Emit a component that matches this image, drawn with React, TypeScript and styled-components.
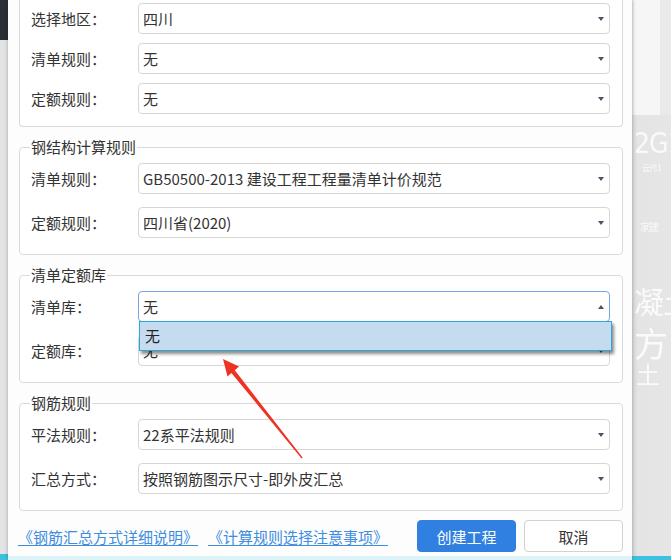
import React from "react";
import styled, { createGlobalStyle, css } from "styled-components";

const GlobalStyle = createGlobalStyle`
  * { box-sizing: border-box; }
  html, body { margin: 0; padding: 0; }
  body {
    width: 671px;
    height: 560px;
    overflow: hidden;
    font-family: "Noto Sans CJK SC", "Microsoft YaHei", sans-serif;
    background: #e4e4e4;
  }
`;

const Screen = styled.div`
  position: relative;
  display: flex;
  width: 671px;
  height: 560px;
  overflow: hidden;
`;

const SideStrip = styled.div`
  width: 8px;
  flex-shrink: 0;
  background: linear-gradient(
    to bottom,
    #2b3037 0,
    #2b3037 40px,
    #e3e4e6 40px,
    #e3e4e6 554px,
    #3cc2df 554px
  );
`;

const Dialog = styled.div`
  position: relative;
  z-index: 1;
  width: 624px;
  flex-shrink: 0;
  display: flex;
  flex-direction: column;
  padding: 0 9px 0 11px;
  background: #fdfdfd;
  border-bottom: 4px solid #dcf3f8;
  box-shadow: 0 0 4px rgba(0, 0, 0, 0.28);
`;

const Group = styled.fieldset<{ $cut?: boolean }>`
  min-width: 0;
  margin: 11px 0 0;
  padding: 7px 12px 16px 11px;
  border: 1px solid #dadada;
  border-radius: 4px;
  background: #fff;

  ${p =>
    p.$cut &&
    css`
      margin-top: 0;
      padding-top: 3px;
      padding-bottom: 12px;
      border-top: none;
      border-top-left-radius: 0;
      border-top-right-radius: 0;
    `}
`;

const Caption = styled.legend`
  padding: 0 1px;
  margin-left: -1px;
  font-size: 15px;
  line-height: 18px;
  color: #333;
`;

const Rows = styled.div<{ $gap: number }>`
  display: grid;
  grid-template-columns: 107px 1fr;
  row-gap: ${p => p.$gap}px;
  align-items: center;
`;

const Label = styled.span`
  font-size: 15px;
  line-height: 18px;
  color: #333;
`;

const SelectBox = styled.div<{ $focused?: boolean }>`
  position: relative;
  height: 31px;
  display: flex;
  align-items: center;
  justify-content: space-between;
  padding: 0 5px 0 4px;
  background: #fff;
  border: 1px solid ${p => (p.$focused ? "#7aa4e8" : "#d6d6d6")};
  border-radius: 4px;
  font-size: 15px;
  color: #333;
  white-space: nowrap;
`;

const Caret = styled.span<{ $up?: boolean }>`
  width: 0;
  height: 0;
  border-left: 3.5px solid transparent;
  border-right: 3.5px solid transparent;
  ${p =>
    p.$up
      ? css`border-bottom: 4px solid #4b5263;`
      : css`border-top: 4px solid #4b5263;`}
`;

const Dropdown = styled.ul`
  position: absolute;
  z-index: 5;
  top: 29px;
  left: 0;
  right: -3px;
  height: 30px;
  margin: 0;
  padding: 0;
  list-style: none;
  background: #c5dbf0;
  border: 1px solid #2ea7d8;
  box-shadow: 2px 3px 3px rgba(0, 0, 0, 0.45);
`;

const Option = styled.li`
  padding-left: 5px;
  line-height: 28px;
  font-size: 15px;
  color: #222;
`;

const Footer = styled.div`
  margin-top: 9px;
  display: flex;
  align-items: center;
  gap: 10px;
`;

const HelpLink = styled.a`
  font-size: 15px;
  color: #3d8de0;
  text-decoration: underline;
  text-underline-offset: 2px;
  cursor: pointer;
  &:first-child { margin-left: -1px; }
`;

const Actions = styled.div`
  margin-left: auto;
  display: flex;
  gap: 8px;
`;

const Button = styled.button<{ $primary?: boolean }>`
  width: 99px;
  height: 32px;
  border-radius: 4px;
  font-family: "Noto Sans CJK SC", sans-serif;
  font-size: 15px;
  cursor: pointer;
  border: 1px solid ${p => (p.$primary ? "#2f80e0" : "#d2d2d2")};
  background: ${p => (p.$primary ? "#2f80e0" : "#fff")};
  color: ${p => (p.$primary ? "#fff" : "#333")};
`;

const Backdrop = styled.div`
  flex: 1;
  min-width: 0;
  display: flex;
  flex-direction: column;
  overflow: hidden;
  background: linear-gradient(to right, #d9d9d9 0, #e4e4e4 6px, #e6e6e6 100%);
  border-bottom: 4px solid #3cc2df;
`;

const TopBand = styled.div`
  height: 115px;
  flex-shrink: 0;
  display: flex;
  background: #eaeaea;
`;

const BandCard = styled.div`
  width: 26px;
  margin-left: 2px;
  background: #f6f6f6;
`;

const Ghost = styled.div<{ $size: number; $gap: number; $shift?: number }>`
  margin-top: ${p => p.$gap}px;
  margin-left: ${p => p.$shift ?? 2}px;
  font-family: "DejaVu Sans Condensed", "Noto Sans CJK SC", sans-serif;
  font-size: ${p => p.$size}px;
  line-height: 1;
  letter-spacing: -1px;
  white-space: nowrap;
  color: rgba(255, 255, 255, 0.8);
  filter: blur(0.6px);
`;

const ArrowLayer = styled.svg`
  position: absolute;
  left: 0;
  top: 0;
  z-index: 10;
  pointer-events: none;
`;

type Field = { label: string; value: string };

const Select = ({ value, open }: { value: string; open?: boolean }) => (
  <SelectBox $focused={open}>
    <span>{value}</span>
    <Caret $up={open} />
    {open && (
      <Dropdown>
        <Option>{value}</Option>
      </Dropdown>
    )}
  </SelectBox>
);

const FieldRows = ({ fields, gap, openIndex }: { fields: Field[]; gap: number; openIndex?: number }) => (
  <Rows $gap={gap}>
    {fields.map((f, i) => (
      <React.Fragment key={f.label}>
        <Label>{f.label}</Label>
        <Select value={f.value} open={i === openIndex} />
      </React.Fragment>
    ))}
  </Rows>
);

export default function App() {
  return (
    <>
      <GlobalStyle />
      <Screen>
        <SideStrip />
        <Dialog>
          <Group $cut>
            <FieldRows
              gap={9}
              fields={[
                { label: "选择地区：", value: "四川" },
                { label: "清单规则：", value: "无" },
                { label: "定额规则：", value: "无" },
              ]}
            />
          </Group>

          <Group>
            <Caption>钢结构计算规则</Caption>
            <FieldRows
              gap={13}
              fields={[
                { label: "清单规则：", value: "GB50500-2013 建设工程工程量清单计价规范" },
                { label: "定额规则：", value: "四川省(2020)" },
              ]}
            />
          </Group>

          <Group>
            <Caption>清单定额库</Caption>
            <FieldRows
              gap={13}
              openIndex={0}
              fields={[
                { label: "清单库：", value: "无" },
                { label: "定额库：", value: "无" },
              ]}
            />
          </Group>

          <Group>
            <Caption>钢筋规则</Caption>
            <FieldRows
              gap={13}
              fields={[
                { label: "平法规则：", value: "22系平法规则" },
                { label: "汇总方式：", value: "按照钢筋图示尺寸-即外皮汇总" },
              ]}
            />
          </Group>

          <Footer>
            <HelpLink>《钢筋汇总方式详细说明》</HelpLink>
            <HelpLink>《计算规则选择注意事项》</HelpLink>
            <Actions>
              <Button $primary>创建工程</Button>
              <Button>取消</Button>
            </Actions>
          </Footer>
        </Dialog>

        <Backdrop>
          <TopBand>
            <BandCard />
          </TopBand>
          <Ghost $size={28} $gap={15}>2G1</Ghost>
          <Ghost $size={8} $gap={7} $shift={10}>云代 1</Ghost>
          <Ghost $size={10} $gap={50} $shift={8}>家建</Ghost>
          <Ghost $size={30} $gap={55} $shift={2}>凝土</Ghost>
          <Ghost $size={34} $gap={10} $shift={2}>方</Ghost>
          <Ghost $size={24} $gap={2} $shift={4}>土</Ghost>
        </Backdrop>

        <ArrowLayer width="671" height="560" viewBox="0 0 671 560">
          <polygon
            fill="#ee3223"
            points="223,359 239,366.5 234.8,370.2 302.6,457.6 301.6,458.4 231.4,372.9 227.5,376.5"
          />
        </ArrowLayer>
      </Screen>
    </>
  );
}
